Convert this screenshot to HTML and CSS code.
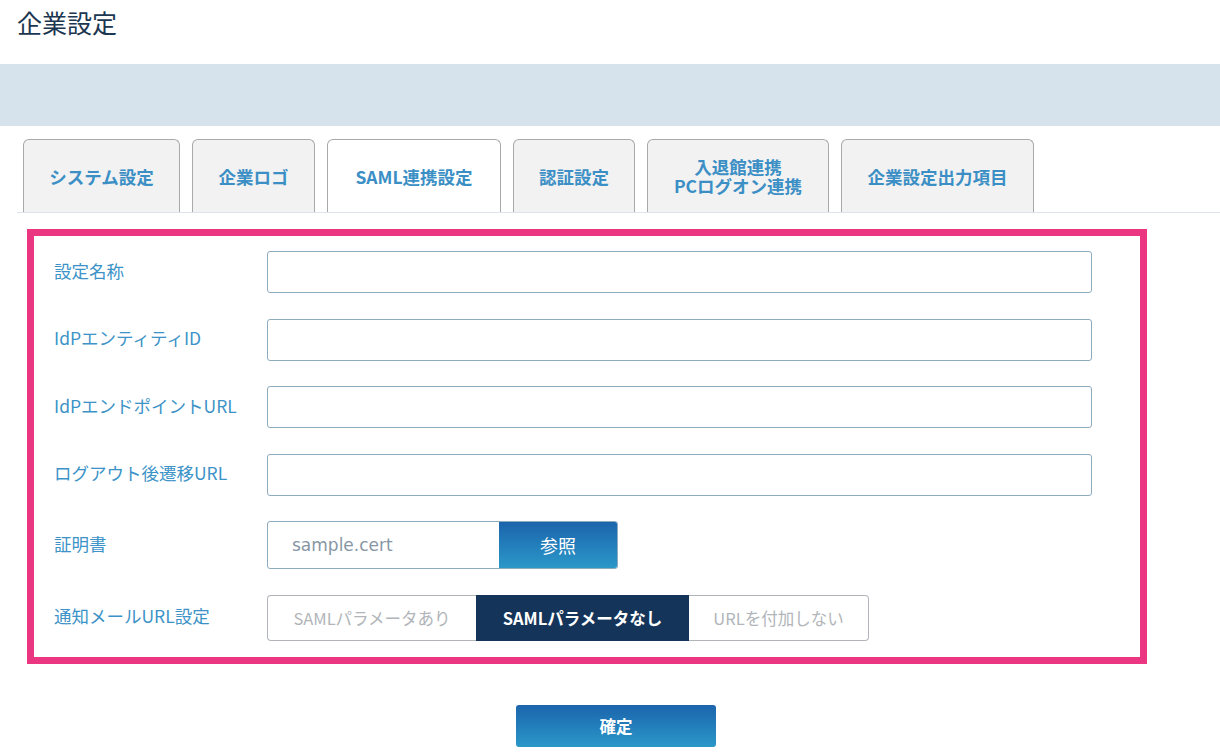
FILE: index.html
```html
<!DOCTYPE html>
<html lang="ja">
  <head>
    <meta charset="UTF-8" />
    <meta name="viewport" content="width=device-width, initial-scale=1" />
    <title>企業設定</title>
    <link rel="stylesheet" href="styles.css">
  </head>
  <body>
    <h1 class="page-title">企業設定</h1>
    <div class="band"></div>

    <nav class="tabs">
      <div class="tab tab-1">システム設定</div>
      <div class="tab tab-2">企業ロゴ</div>
      <div class="tab tab-3 active">SAML連携設定</div>
      <div class="tab tab-4">認証設定</div>
      <div class="tab tab-5">入退館連携<br>PCログオン連携</div>
      <div class="tab tab-6">企業設定出力項目</div>
    </nav>

    <section class="form-box">
      <div class="row">
        <label class="label">設定名称</label>
        <input class="text-input" type="text" />
      </div>
      <div class="row">
        <label class="label">IdPエンティティID</label>
        <input class="text-input" type="text" />
      </div>
      <div class="row">
        <label class="label">IdPエンドポイントURL</label>
        <input class="text-input" type="text" />
      </div>
      <div class="row">
        <label class="label">ログアウト後遷移URL</label>
        <input class="text-input" type="text" />
      </div>
      <div class="row row-cert">
        <label class="label">証明書</label>
        <div class="file-box">
          <span class="file-name">sample.cert</span>
          <button class="file-btn">参照</button>
        </div>
      </div>
      <div class="row row-seg">
        <label class="label">通知メールURL設定</label>
        <div class="segments">
          <div class="seg seg-1">SAMLパラメータあり</div>
          <div class="seg seg-2 selected">SAMLパラメータなし</div>
          <div class="seg seg-3">URLを付加しない</div>
        </div>
      </div>
    </section>

    <div class="actions">
      <button class="confirm">確定</button>
    </div>
  </body>
</html>
```

FILE: styles.css
```css
/* company settings page */
body {
  margin: 0;
  background: #fff;
  font-family: "Noto Sans CJK JP", "Noto Sans", sans-serif;
  color: #333;
}
.page-title {
  margin: 0;
  height: 64px;
  box-sizing: border-box;
  padding: 5px 17px 0;
  font-size: 25px;
  font-weight: 400;
  line-height: 34px;
  color: #1b3650;
}
.band {
  height: 62px;
  background: #d6e3ec;
}

/* tabs */
.tabs {
  display: flex;
  gap: 12px;
  margin: 13px 0 0 17px;
  padding-left: 6px;
  border-bottom: 1px solid #dde3e8;
}
.tab {
  height: 73px;
  box-sizing: border-box;
  display: flex;
  align-items: center;
  justify-content: center;
  text-align: center;
  background: #f2f2f2;
  border: 1px solid #a9a9a9;
  border-bottom: none;
  border-radius: 6px 6px 0 0;
  color: #3b8fc5;
  font-size: 17.5px;
  font-weight: 700;
  line-height: 19px;
}
.tab.active {
  background: #fff;
}
.tab-1 { width: 157px; }
.tab-2 { width: 123px; }
.tab-3 { width: 174px; }
.tab-4 { width: 122px; }
.tab-5 { width: 182px; }
.tab-6 { width: 193px; }

/* form */
.form-box {
  margin: 16px 0 0 27px;
  width: 1120px;
  height: 435px;
  box-sizing: border-box;
  border: 7px solid #eb3781;
  padding: 15px 0 0 20px;
  display: flex;
  flex-direction: column;
  gap: 25.5px;
}
.row {
  display: flex;
  align-items: center;
}
.label {
  width: 213px;
  flex-shrink: 0;
  font-size: 17.5px;
  line-height: 24px;
  padding-bottom: 3px;
  color: #3d93c7;
}
.text-input {
  width: 825px;
  height: 42px;
  box-sizing: border-box;
  border: 1px solid #8eaabf;
  border-radius: 3px;
  margin: 0;
  font: inherit;
}
.file-box {
  display: flex;
  width: 351px;
  height: 48px;
  border: 1px solid #8eaabf;
  border-radius: 3px;
  box-sizing: border-box;
  overflow: hidden;
}
.file-name {
  width: 231px;
  padding-left: 24px;
  box-sizing: border-box;
  line-height: 46px;
  font-family: "DejaVu Sans", sans-serif;
  font-size: 17px;
  color: #8796a4;
}
.file-btn {
  flex: 1;
  border: none;
  margin: 0;
  background: linear-gradient(#1b64ac, #2b98c9);
  color: #fff;
  font: inherit;
  font-size: 18px;
}
.segments {
  display: flex;
  height: 46px;
}
.seg {
  display: flex;
  align-items: center;
  justify-content: center;
  box-sizing: border-box;
  font-size: 16.5px;
  color: #b1b5b9;
  border: 1px solid #b1b5b9;
}
.seg-1 {
  width: 209px;
  border-right: none;
  border-radius: 4px 0 0 4px;
}
.seg-2 {
  width: 213px;
}
.seg-3 {
  width: 180px;
  border-left: none;
  border-radius: 0 4px 4px 0;
}
.seg.selected {
  background: #143459;
  border-color: #143459;
  color: #fff;
  font-weight: 700;
}

/* confirm */
.actions {
  margin: 41px 0 0 516px;
}
.confirm {
  width: 200px;
  height: 42px;
  border: none;
  border-radius: 3px;
  background: linear-gradient(#1b64ac, #2b98c9);
  color: #fff;
  font: inherit;
  font-size: 16.5px;
  font-weight: 700;
}
```
